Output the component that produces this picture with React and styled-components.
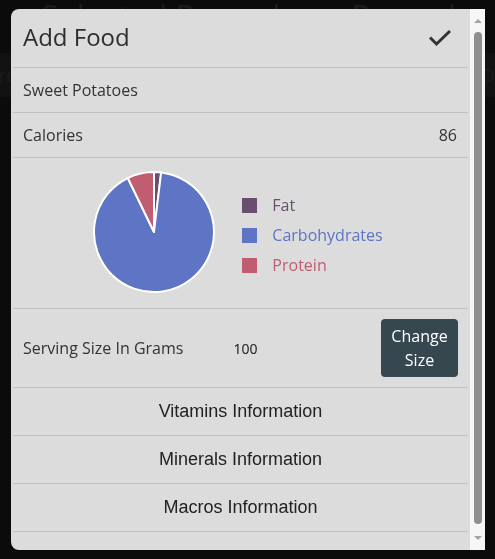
import styled, { createGlobalStyle } from "styled-components";

const GlobalStyle = createGlobalStyle`
  html, body {
    margin: 0;
    padding: 0;
    background: #0b0b0b;
  }
  body {
    font-family: "Open Sans", "Liberation Sans", sans-serif;
  }
`;

const slices = [
  { name: "Fat", value: 1.9, color: "#6a4e70" },
  { name: "Carbohydrates", value: 90.9, color: "#5e74c4" },
  { name: "Protein", value: 7.2, color: "#c15d71" },
];

const infoRows = ["Vitamins Information", "Minerals Information", "Macros Information"];

function arcPath(cx, cy, r, start, end) {
  const a0 = (start / 100) * Math.PI * 2 - Math.PI / 2;
  const a1 = (end / 100) * Math.PI * 2 - Math.PI / 2;
  const x0 = cx + r * Math.cos(a0);
  const y0 = cy + r * Math.sin(a0);
  const x1 = cx + r * Math.cos(a1);
  const y1 = cy + r * Math.sin(a1);
  const large = end - start > 50 ? 1 : 0;
  return `M ${cx} ${cy} L ${x0} ${y0} A ${r} ${r} 0 ${large} 1 ${x1} ${y1} Z`;
}

function PieChart() {
  let acc = 0;
  return (
    <PieSvg width="124" height="124" viewBox="0 0 124 124">
      {slices.map((s) => {
        const d = arcPath(62, 62, 60, acc, acc + s.value);
        acc += s.value;
        return <path key={s.name} d={d} fill={s.color} stroke="#fff" strokeWidth="2" strokeLinejoin="round" />;
      })}
    </PieSvg>
  );
}

export default function App() {
  return (
    <>
      <GlobalStyle />
      <Backdrop>
        <PageTitle>Selected Record newRecord</PageTitle>
        <Band>
          <BandText>Record</BandText>
          <BandText>Date</BandText>
        </Band>
      </Backdrop>
      <Modal>
        <Content>
          <Header>
            <Title>Add Food</Title>
            <svg width="24" height="18" viewBox="0 0 24 18">
              <polyline points="2,8.5 8.5,15 22,2" fill="none" stroke="#333" strokeWidth="3" />
            </svg>
          </Header>
          <Row>
            <Label>Sweet Potatoes</Label>
          </Row>
          <Row>
            <Label>Calories</Label>
            <Value>86</Value>
          </Row>
          <ChartRow>
            <PieChart />
            <Legend>
              {slices.map((s) => (
                <LegendItem key={s.name} $color={s.color}>
                  <Swatch $color={s.color} />
                  {s.name}
                </LegendItem>
              ))}
            </Legend>
          </ChartRow>
          <ServingRow>
            <Label>Serving Size In Grams</Label>
            <Grams>100</Grams>
            <ChangeButton>
              Change
              <br />
              Size
            </ChangeButton>
          </ServingRow>
          {infoRows.map((t) => (
            <InfoRow key={t}>{t}</InfoRow>
          ))}
        </Content>
        <ScrollTrack>
          <Arrow />
          <Thumb />
          <Arrow $down />
        </ScrollTrack>
      </Modal>
    </>
  );
}

const Backdrop = styled.div`
  height: 559px;
  overflow: hidden;
  display: flex;
  flex-direction: column;
`;

const PageTitle = styled.div`
  margin-top: -3px;
  text-align: center;
  font-size: 32px;
  line-height: 40px;
  color: #1b1b1b;
  padding-left: 2px;
`;

const Band = styled.div`
  margin-top: 16px;
  height: 44px;
  background: #121212;
  display: flex;
  justify-content: space-between;
  align-items: center;
  font-size: 18px;
  color: #1d1d1d;
`;

const BandText = styled.span`
  &:first-child {
    margin-left: -42px;
  }
  &:last-child {
    margin-right: -26px;
  }
`;

const Modal = styled.div`
  position: fixed;
  top: 9px;
  left: 11px;
  width: 474px;
  height: 541px;
  display: flex;
  border-radius: 8px 0 0 8px;
  overflow: hidden;
  background: #dcdcdc;
`;

const Content = styled.div`
  flex: 1;
  padding: 0 2px;
  display: flex;
  flex-direction: column;
`;

const RowBase = styled.div`
  display: flex;
  align-items: center;
  border-bottom: 1px solid #c0c0c0;
  color: #333;
`;

const Header = styled(RowBase)`
  height: 58px;
  padding: 0 16px 0 10px;
  justify-content: space-between;
`;

const Title = styled.h1`
  margin: 0;
  font-weight: 400;
  font-size: 24px;
  color: #2e2e2e;
  padding-bottom: 3px;
`;

const Row = styled(RowBase)`
  height: 44px;
  padding: 0 11px 0 10px;
  justify-content: space-between;
  font-size: 16px;
`;

const Label = styled.span`
  font-size: 16px;
  color: #333;
`;

const Value = styled.span`
  font-size: 16px;
  color: #333;
`;

const ChartRow = styled(RowBase)`
  height: 150px;
  justify-content: center;
  gap: 26px;
  padding-right: 6px;
`;

const PieSvg = styled.svg`
  margin-bottom: 2px;
`;

const Legend = styled.div`
  display: flex;
  flex-direction: column;
  gap: 8px;
  margin-top: 4px;
`;

const LegendItem = styled.div`
  display: flex;
  align-items: center;
  gap: 15px;
  font-size: 16px;
  line-height: 22px;
  color: ${(p) => p.$color};
`;

const Swatch = styled.span`
  width: 15px;
  height: 15px;
  background: ${(p) => p.$color};
`;

const ServingRow = styled(RowBase)`
  height: 78px;
  padding: 0 10px;
`;

const Grams = styled.span`
  margin-left: 50px;
  font-family: "Noto Sans", "Liberation Sans", sans-serif;
  font-size: 14px;
  color: #222;
  flex: 1;
`;

const ChangeButton = styled.button`
  width: 77px;
  height: 58px;
  border: none;
  border-radius: 4px;
  background: #37474f;
  color: #fff;
  font-family: "Open Sans", sans-serif;
  font-size: 16px;
  line-height: 24px;
  padding: 0;
`;

const InfoRow = styled(RowBase)`
  height: 47px;
  justify-content: center;
  font-family: "Liberation Sans", Arial, sans-serif;
  font-size: 18px;
  color: #222;
`;

const ScrollTrack = styled.div`
  width: 15px;
  background: #f6f6f6;
  display: flex;
  flex-direction: column;
  align-items: center;
  padding: 10px 0;
  box-sizing: border-box;
`;

const Arrow = styled.div`
  width: 0;
  height: 0;
  border-left: 4px solid transparent;
  border-right: 4px solid transparent;
  ${(p) =>
    p.$down
      ? "border-top: 4px solid #a3a3a3; margin-top: 12px;"
      : "border-bottom: 4px solid #a3a3a3; margin-bottom: 9px;"}
`;

const Thumb = styled.div`
  width: 8px;
  height: 493px;
  border-radius: 4px;
  background: #8f8f8f;
`;
